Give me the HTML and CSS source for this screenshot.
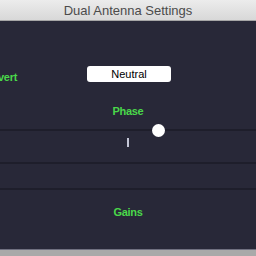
FILE: index.html
```html
<!DOCTYPE html>
<html>
<head>
  <title>Dual Antenna Settings</title>
  <link rel="stylesheet" href="styles.css">
</head>
<body>
  <div class="window">
    <div class="titlebar">Dual Antenna Settings</div>
    <div class="content">
      <div class="invert-row">
        <div class="label invert-label">Invert</div>
        <div class="select-box">Neutral</div>
      </div>
      <div class="label section-label phase-label">Phase</div>
      <div class="slider-row">
        <div class="knob"></div>
        <div class="tick"></div>
      </div>
      <div class="empty-row"></div>
      <div class="gains-row">
        <div class="label section-label">Gains</div>
      </div>
    </div>
    <div class="statusbar"></div>
  </div>
</body>
</html>
```

FILE: styles.css
```css
:root {
  --panel: #282838;
  --divider: #1e1e2b;
  --green: #4ad84a;
  --title-text: #4b4b4b;
}

body {
  margin: 0;
  padding: 0;
  background: var(--panel);
  font-family: 'Liberation Sans', Arial, sans-serif;
  overflow: hidden;
}

.window {
  width: 256px;
  height: 256px;
  display: flex;
  flex-direction: column;
}

.titlebar {
  height: 20px;
  line-height: 22px;
  text-align: center;
  font-size: 13px;
  color: var(--title-text);
  background: linear-gradient(#ececec, #d8d8d8);
  border-bottom: 1px solid #a6a6a6;
  box-sizing: content-box;
}

.content {
  height: 228px;
  background: var(--panel);
  display: flex;
  flex-direction: column;
}

.label {
  color: var(--green);
  font-size: 11px;
  line-height: 13px;
  font-weight: 700;
  letter-spacing: -0.3px;
}

.invert-row {
  display: flex;
  align-items: center;
  margin-top: 45px;
  height: 16px;
}

.invert-label {
  width: 40px;
  margin-left: -23px;
  margin-top: 6px;
  text-align: right;
}

.select-box {
  margin-left: 70px;
  width: 84px;
  height: 16px;
  line-height: 16px;
  background: #fff;
  border-radius: 3px;
  color: #000;
  font-size: 11px;
  text-align: center;
}

.section-label {
  text-align: center;
}

.phase-label {
  margin-top: 23px;
  height: 13px;
  padding-bottom: 11px;
}

.slider-row {
  position: relative;
  height: 31px;
  border-top: 2px solid var(--divider);
  border-bottom: 2px solid var(--divider);
}

.knob {
  position: absolute;
  left: 152px;
  top: -7px;
  width: 13px;
  height: 13px;
  border-radius: 50%;
  background: #fff;
}

.tick {
  width: 2px;
  height: 9px;
  margin: 7px 0 0 127px;
  background: #c4c6d6;
}

.empty-row {
  height: 24px;
  border-bottom: 2px solid var(--divider);
}

.gains-row {
  flex: 1;
  padding-top: 16px;
}

.statusbar {
  flex: 1;
  background: #a9a9a9;
  border-top: 1px solid #707080;
}
```
